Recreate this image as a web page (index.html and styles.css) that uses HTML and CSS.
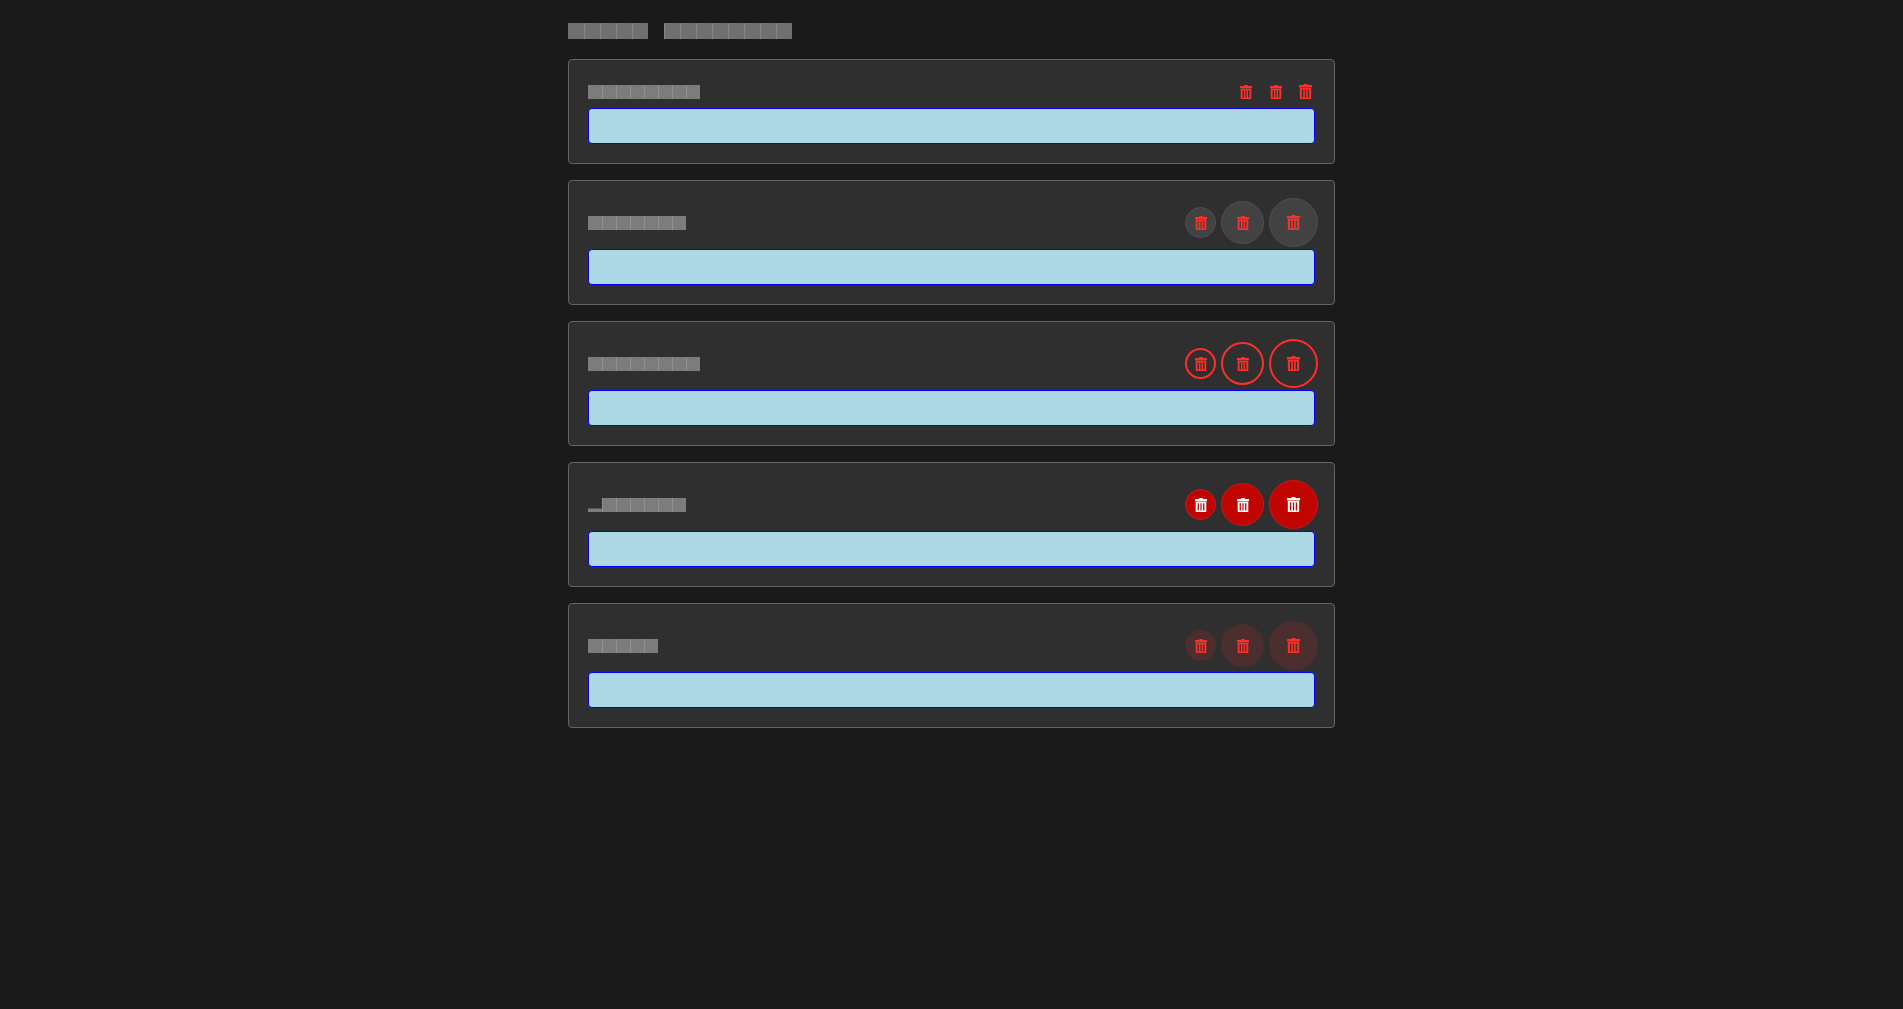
FILE: index.html
```html
<!DOCTYPE html>
<html lang="en">
<head>
<meta charset="utf-8">
<title>Icon buttons</title>
<link rel="stylesheet" href="styles.css">
</head>
<body>
<svg class="defs" aria-hidden="true">
  <symbol id="trash" viewBox="0 0 12 14">
    <path fill="currentColor" fill-rule="evenodd" d="M4.5 0h3l.5 1h4v1.7H0V1h4zM0 2.7h12v.5H0zM.7 3.8h10.6V13.4q0 .6-.6.6H1.3q-.6 0-.6-.6zM2.6 5.2v7.4H3.9V5.2zM5.4 5.2v7.4H6.6V5.2zM8.1 5.2v7.4H9.4V5.2z"/>
  </symbol>
</svg>
<main class="page">
  <h1 class="title">█████　████████</h1>
  <section class="card">
    <header class="row">
      <h2 class="label">████████</h2>
      <div class="actions plain">
        <button class="btn small"><svg class="icon"><use href="#trash"/></svg></button>
        <button class="btn medium"><svg class="icon"><use href="#trash"/></svg></button>
        <button class="btn large"><svg class="icon"><use href="#trash"/></svg></button>
      </div>
    </header>
    <div class="slot"></div>
  </section>
  <section class="card">
    <header class="row">
      <h2 class="label">███████</h2>
      <div class="actions neutral">
        <button class="btn small"><svg class="icon"><use href="#trash"/></svg></button>
        <button class="btn medium"><svg class="icon"><use href="#trash"/></svg></button>
        <button class="btn large"><svg class="icon"><use href="#trash"/></svg></button>
      </div>
    </header>
    <div class="slot"></div>
  </section>
  <section class="card">
    <header class="row">
      <h2 class="label">████████</h2>
      <div class="actions outlined">
        <button class="btn small"><svg class="icon"><use href="#trash"/></svg></button>
        <button class="btn medium"><svg class="icon"><use href="#trash"/></svg></button>
        <button class="btn large"><svg class="icon"><use href="#trash"/></svg></button>
      </div>
    </header>
    <div class="slot"></div>
  </section>
  <section class="card">
    <header class="row">
      <h2 class="label">▂██████</h2>
      <div class="actions solid">
        <button class="btn small"><svg class="icon"><use href="#trash"/></svg></button>
        <button class="btn medium"><svg class="icon"><use href="#trash"/></svg></button>
        <button class="btn large"><svg class="icon"><use href="#trash"/></svg></button>
      </div>
    </header>
    <div class="slot"></div>
  </section>
  <section class="card">
    <header class="row">
      <h2 class="label">█████</h2>
      <div class="actions tinted">
        <button class="btn small"><svg class="icon"><use href="#trash"/></svg></button>
        <button class="btn medium"><svg class="icon"><use href="#trash"/></svg></button>
        <button class="btn large"><svg class="icon"><use href="#trash"/></svg></button>
      </div>
    </header>
    <div class="slot"></div>
  </section>
</main>
</body>
</html>
```
FILE: styles.css
```css
* { box-sizing: border-box; }

body {
  margin: 0;
  background: #1a1a1a;
  font-family: "Noto Sans CJK JP", sans-serif;
}

.defs { display: none; }

.page {
  max-width: 767px;
  margin: 0 auto;
  padding: 18px 0;
  display: flex;
  flex-direction: column;
  gap: 16px;
}

/* Block glyphs are one em wide; a lighter seam marks each cell edge. */
.title,
.label {
  margin: 0;
  font-weight: 400;
  color: transparent;
  background:
    linear-gradient(var(--ink), var(--ink)) 0 0 / 1px 100% no-repeat,
    linear-gradient(to right, var(--seam) 1px, var(--ink) 1px) 0 0 / 1em 100% repeat-x;
  -webkit-background-clip: text;
  background-clip: text;
}

.title {
  --ink: #707070;
  --seam: #868686;
  font-size: 16px;
  line-height: 25px;
}

.label {
  --ink: #7c7c7c;
  --seam: #919191;
  padding-bottom: 2px;
  font-size: 14px;
  line-height: 20px;
}

.card {
  background: #2f2f2f;
  border: 1px solid #636363;
  border-radius: 4px;
  padding: 17px 19px 19px;
}

.row {
  display: flex;
  align-items: center;
  justify-content: space-between;
  min-height: 29px;
  margin-bottom: 2px;
}

.actions {
  display: flex;
  align-items: center;
  gap: 5px;
  margin-right: -3px;
}

.btn {
  display: grid;
  place-items: center;
  padding: 0;
  border: 1px solid transparent;
  border-radius: 50%;
  background: none;
  color: #ff3029;
}

.small { width: 31px; height: 31px; }
.medium { width: 43px; height: 43px; }
.large { width: 49px; height: 49px; }

.icon { display: block; width: 12px; height: 14px; }
.large .icon { width: 13px; height: 15px; }

.plain .btn { width: 25px; height: 25px; }
.neutral .btn { background: #424242; border-color: #505050; }
.outlined .btn { border: 2px solid #ff3029; }
.solid .btn { background: #c00500; border-color: #cb1a15; color: #fff; }
.tinted .btn { background: #4b2e2d; }

.slot {
  height: 36px;
  background: #add8e6;
  border: 1px solid #00f;
  border-radius: 4px;
}
```
